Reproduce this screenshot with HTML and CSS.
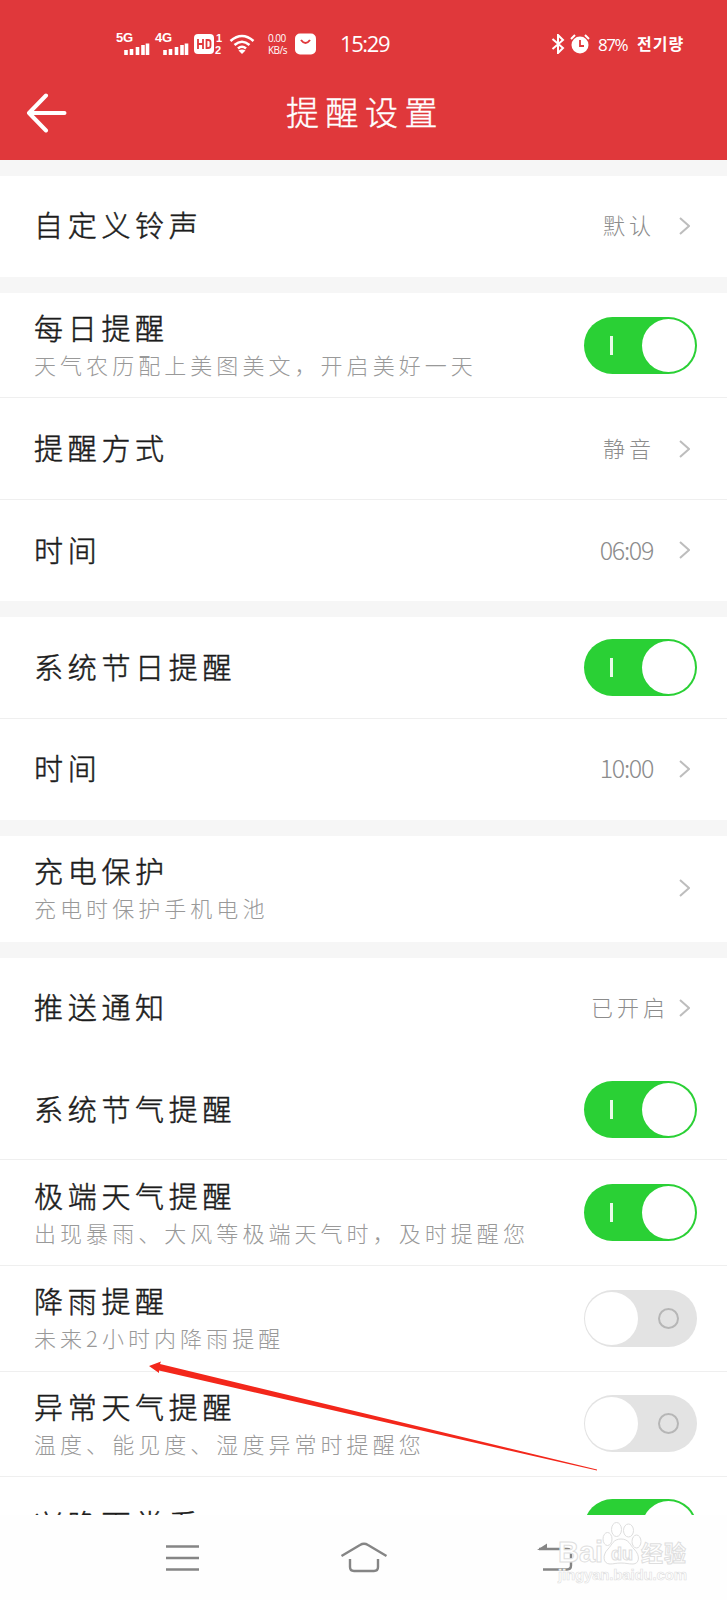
FILE: index.html
```
<!DOCTYPE html>
<html lang="zh-CN">
<head>
    <meta charset="UTF-8">
    <meta name="viewport" content="width=device-width, initial-scale=1.0">
    <title>提醒设置</title>
    <link rel="stylesheet" href="styles.css">
</head>
<body>
    <div class="screen">
        <header class="header">
            <div class="status">
                <svg class="signal" width="34" height="24" viewBox="0 0 34 24">
                    <text x="0" y="10" textLength="17">5G</text>
                    <path d="M10 18v5M15.500 17v6M21.500 15v8M27 13v10M31.500 11.500v11.500"/>
                </svg>
                <svg class="signal" width="34" height="24" viewBox="0 0 34 24">
                    <text x="0" y="10" textLength="17">4G</text>
                    <path d="M10 18v5M15.500 17v6M21.500 15v8M27 13v10M31.500 11.500v11.500"/>
                </svg>
                <svg class="hd" width="29" height="22" viewBox="0 0 29 22">
                    <rect x="0" y="1" width="20" height="20" rx="4" fill="#fff"/>
                    <path d="M4 6v10M9 6v10M4 11h5M12.500 7h1.500q2.500 0 2.500 2v4q0 2-2.500 2h-1.500z" fill="none" stroke="#e0383b" stroke-width="1.800"/>
                    <text x="22" y="9">1</text>
                    <text x="21" y="21">2</text>
                </svg>
                <svg class="wifi" width="26" height="22" viewBox="0 0 26 22">
                    <path d="M1.500 8q11.500-10 23 0M5.500 12q7.500-6.500 15 0M9 15.500q4-3.500 8 0" fill="none" stroke="#fff" stroke-width="2.600"/>
                    <path d="M9.500 17.500q3.500-2 7 0L13 21z" fill="#fff"/>
                </svg>
                <div class="speed"><span>0.00</span><span>KB/s</span></div>
                <svg class="bag" width="21" height="22" viewBox="0 0 21 22">
                    <rect y="0.500" width="21" height="21" rx="5" fill="#fff"/>
                    <path d="M6 7q4.500 6 9 0" fill="none" stroke="#e0383b" stroke-width="2"/>
                </svg>
                <span class="clock">15:29</span>
                <svg class="bluetooth" width="14" height="20" viewBox="0 0 14 20">
                    <path d="M1.500 5l10.500 9-5 5V1l5 5L1.500 15" fill="none" stroke="#fff" stroke-width="2"/>
                </svg>
                <svg class="alarm" width="20" height="20" viewBox="0 0 20 20">
                    <circle cx="10" cy="11" r="8.500" fill="#fff"/>
                    <path d="M1 5l4-4M19 5l-4-4" stroke="#fff" stroke-width="2"/>
                    <path d="M10 6v6h4" fill="none" stroke="#e0383b" stroke-width="1.800"/>
                </svg>
                <span class="percent">87%</span>
                <span class="battery">전기량</span>
            </div>
            <div class="titlebar">
                <svg class="back" width="42" height="40" viewBox="0 0 42 40">
                    <path d="M20 2.500L3 20l17 17.500M3 20h35.500" fill="none" stroke="#fff" stroke-width="4" stroke-linecap="round" stroke-linejoin="round"/>
                </svg>
                <h1>提醒设置</h1>
            </div>
        </header>

        <main class="list">
            <section class="group">
                <div class="row">
                    <h2>自定义铃声</h2>
                    <span class="value">默认</span>
                    <svg class="chevron" viewBox="0 0 11 18"><path d="M1 1l9 8-9 8"/></svg>
                </div>
            </section>

            <section class="group">
                <div class="row tall">
                    <div class="label">
                        <h2>每日提醒</h2>
                        <p>天气农历配上美图美文，开启美好一天</p>
                    </div>
                    <div class="toggle on"></div>
                </div>
                <div class="row">
                    <h2>提醒方式</h2>
                    <span class="value">静音</span>
                    <svg class="chevron" viewBox="0 0 11 18"><path d="M1 1l9 8-9 8"/></svg>
                </div>
                <div class="row">
                    <h2>时间</h2>
                    <span class="value time">06:09</span>
                    <svg class="chevron" viewBox="0 0 11 18"><path d="M1 1l9 8-9 8"/></svg>
                </div>
            </section>

            <section class="group">
                <div class="row">
                    <h2>系统节日提醒</h2>
                    <div class="toggle on"></div>
                </div>
                <div class="row">
                    <h2>时间</h2>
                    <span class="value time">10:00</span>
                    <svg class="chevron" viewBox="0 0 11 18"><path d="M1 1l9 8-9 8"/></svg>
                </div>
            </section>

            <section class="group">
                <div class="row tall">
                    <div class="label">
                        <h2>充电保护</h2>
                        <p>充电时保护手机电池</p>
                    </div>
                    <svg class="chevron" viewBox="0 0 11 18"><path d="M1 1l9 8-9 8"/></svg>
                </div>
            </section>

            <section class="group">
                <div class="row plain">
                    <h2>推送通知</h2>
                    <span class="value near">已开启</span>
                    <svg class="chevron" viewBox="0 0 11 18"><path d="M1 1l9 8-9 8"/></svg>
                </div>
                <div class="row">
                    <h2>系统节气提醒</h2>
                    <div class="toggle on"></div>
                </div>
                <div class="row tall">
                    <div class="label">
                        <h2>极端天气提醒</h2>
                        <p>出现暴雨、大风等极端天气时，及时提醒您</p>
                    </div>
                    <div class="toggle on"></div>
                </div>
                <div class="row tall">
                    <div class="label">
                        <h2>降雨提醒</h2>
                        <p>未来2小时内降雨提醒</p>
                    </div>
                    <div class="toggle"></div>
                </div>
                <div class="row tall">
                    <div class="label">
                        <h2>异常天气提醒</h2>
                        <p>温度、能见度、湿度异常时提醒您</p>
                    </div>
                    <div class="toggle"></div>
                </div>
                <div class="row last">
                    <h2>兴晚雨常看</h2>
                    <div class="toggle on"></div>
                </div>
            </section>
        </main>

        <nav class="navbar">
            <svg width="36" height="30" viewBox="0 0 36 30">
                <path d="M2 3.500h33M2 15h33M2 26.500h33"/>
            </svg>
            <svg class="home" width="48" height="34" viewBox="0 0 48 34">
                <path d="M1.500 15L20 4q4-2.500 8 0l18.500 11M10 18v8q0 4 4 4h20q4 0 4-4v-8"/>
            </svg>
            <svg width="36" height="30" viewBox="0 0 36 30">
                <path d="M2 6h28q4 0 4 4v12.500q0 4-4 4H6"/>
                <path class="head" d="M0 7L10 0.500V7z"/>
            </svg>
        </nav>

        <svg class="pointer" width="450" height="112" viewBox="0 0 450 112">
            <path d="M0 5L12 0.500 11 3 448 108.500v1L10 9.500V12z"/>
        </svg>

        <div class="watermark">
            <svg width="132" height="66" viewBox="0 0 132 66">
                <g class="paw">
                    <ellipse cx="50.500" cy="19" rx="4.500" ry="6.500"/>
                    <ellipse cx="59.500" cy="9.500" rx="5" ry="7"/>
                    <ellipse cx="71.500" cy="10.500" rx="5" ry="6.500"/>
                    <ellipse cx="79.500" cy="21.500" rx="4.500" ry="6.500"/>
                    <path d="M64 19c8 0 9 6 13 10 7 7 5 15-1 15-5 0-7-1-12-1s-7 1-11 1c-7 0-8-9-2-15 4-4 5-10 13-10z"/>
                </g>
                <text class="brand" x="1" y="42" textLength="45">Bai</text>
                <text class="du" x="54" y="40">du</text>
                <text class="cn" x="84" y="41" textLength="45">经验</text>
                <text class="url" x="1" y="60" textLength="129">jingyan.baidu.com</text>
            </svg>
        </div>
    </div>
</body>
</html>
```
FILE: styles.css
```
* {
    box-sizing: border-box;
}
body {
    margin: 0;
    font-family: "Noto Sans CJK SC", sans-serif;
    font-weight: 300;
    color: #1c1c1c;
    background-color: #fff;
}
.screen {
    position: relative;
    display: flex;
    flex-direction: column;
    width: 727px;
    height: 1600px;
    overflow: hidden;
}
svg {
    display: block;
    flex: none;
}
h1, h2, p {
    margin: 0;
    font-weight: 300;
}

/* header */
.header {
    flex: none;
    height: 159.500px;
    color: #fff;
    background-color: #e0383b;
}
.status {
    display: flex;
    align-items: center;
    height: 66px;
    padding: 22px 0 0 116px;
}
.signal {
    margin-right: 5px;
    overflow: visible;
}
.signal text, .hd text {
    fill: #fff;
    font: bold 13px "Liberation Sans", sans-serif;
}
.signal path {
    stroke: #fff;
    stroke-width: 3.600;
}
.hd text {
    font-size: 11px;
}
.wifi {
    margin-left: 6px;
}
.speed {
    display: flex;
    flex-direction: column;
    width: 20px;
    margin-left: 13px;
    font: 10px/12px "Open Sans", sans-serif;
    letter-spacing: -0.500px;
}
.bag {
    margin-left: 7px;
}
.clock {
    width: 48px;
    margin-left: 24px;
    margin-top: -3px;
    font: 22px "Open Sans", sans-serif;
    letter-spacing: -1.400px;
}
.bluetooth {
    margin-left: 163px;
}
.alarm {
    margin-left: 5px;
}
.percent {
    width: 33px;
    margin-left: 8px;
    font: 17px "Open Sans", sans-serif;
    letter-spacing: -1.500px;
}
.battery {
    margin-left: 6px;
    margin-top: -2px;
    font: bold 16px "Noto Sans CJK KR", sans-serif;
    letter-spacing: 1px;
}
.titlebar {
    display: flex;
    align-items: center;
    height: 93px;
    padding-left: 26px;
}
h1 {
    margin: -3px 0 0 218px;
    font-size: 33px;
    letter-spacing: 6.500px;
    line-height: 90px;
    -webkit-text-stroke: 0.400px;
}

/* settings list */
.list {
    flex: none;
    height: 1355.500px;
    overflow: hidden;
    background-color: #f6f6f6;
}
.group {
    margin-top: 16px;
    background-color: #fff;
}
.row {
    display: flex;
    align-items: center;
    height: 101.400px;
    padding: 0 37px 0 34px;
    border-bottom: 1px solid #efefef;
}
.row.tall {
    height: 105.600px;
}
.row.plain, .row:last-child {
    border-bottom-color: transparent;
}
.row > h2, .value {
    margin-bottom: 3px;
}
h2 {
    font-size: 29px;
    letter-spacing: 4.700px;
    line-height: 38px;
    -webkit-text-stroke: 0.500px;
}
.row.last h2 {
    margin-bottom: 8px;
}
.label p {
    color: #999;
    font-size: 22px;
    letter-spacing: 4.050px;
    line-height: 36px;
    white-space: nowrap;
}
.value {
    margin-left: auto;
    margin-right: 24px;
    color: #8c8c8c;
    font-size: 22px;
    letter-spacing: 4px;
}
.value.near {
    margin-right: 10px;
}
.value.time {
    margin-right: 26px;
    font-size: 25px;
    letter-spacing: -1.300px;
}
.chevron {
    width: 11px;
    height: 18px;
    fill: none;
    stroke: #bdbdbd;
    stroke-width: 2;
}
.label + .chevron {
    margin-left: auto;
}

/* switch */
.toggle {
    position: relative;
    width: 113px;
    height: 57px;
    margin-left: auto;
    margin-right: -7px;
    border-radius: 29px;
    background-color: #e3e3e3;
}
.toggle::before {
    content: "";
    position: absolute;
    top: 2px;
    left: 1px;
    width: 53px;
    height: 53px;
    border-radius: 50%;
    background-color: #fff;
}
.toggle::after {
    content: "";
    position: absolute;
    top: 18px;
    right: 18px;
    width: 21px;
    height: 21px;
    border: 2px solid #b6b6b6;
    border-radius: 50%;
    box-sizing: border-box;
}
.toggle.on {
    background-color: #2ad035;
}
.toggle.on::before {
    left: 58px;
}
.toggle.on::after {
    top: 19px;
    left: 26px;
    width: 3px;
    height: 19px;
    border: 0;
    border-radius: 0;
    background-color: #e9fbe9;
}

/* system navigation */
.navbar {
    display: flex;
    flex: 1;
    align-items: center;
    justify-content: space-between;
    padding: 0 154px 0 164px;
    background-color: #fefefe;
}
.navbar path {
    fill: none;
    stroke: #858585;
    stroke-width: 2.400;
}
.navbar .home {
    margin-right: 10px;
}
.navbar .head {
    fill: #858585;
    stroke: none;
}

.pointer {
    position: absolute;
    top: 1361px;
    left: 149px;
    fill: #f3271b;
}
.watermark {
    position: absolute;
    top: 1520px;
    left: 557px;
}
.watermark text, .paw {
    fill: #fff;
    stroke: #dedede;
    stroke-width: 1;
    font-family: "Liberation Sans", "Noto Sans CJK SC", sans-serif;
    font-weight: bold;
}
.watermark .brand {
    font-size: 29px;
}
.watermark .du {
    font-size: 18px;
}
.watermark .cn {
    font-size: 22px;
}
.watermark .url {
    font-size: 15px;
    stroke-width: 0.600;
}
```
